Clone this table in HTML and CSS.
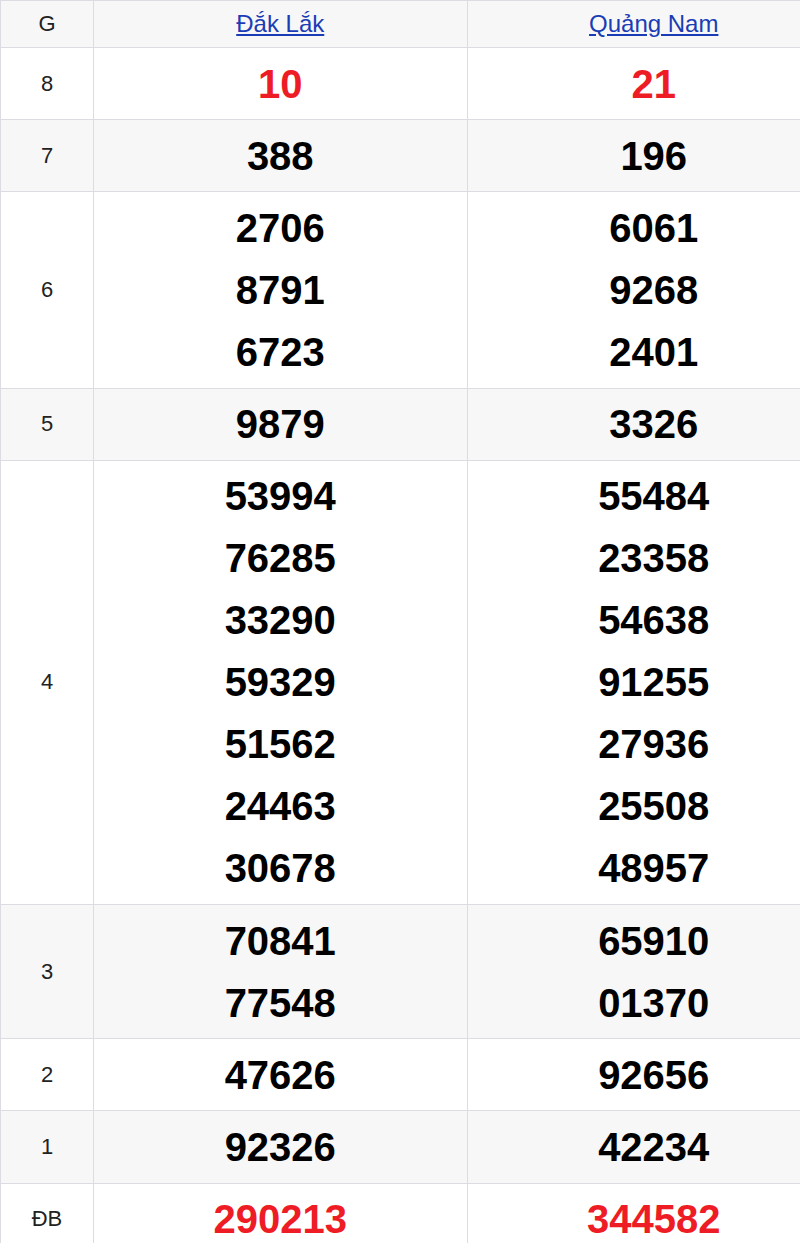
FILE: index.html
```html
<!DOCTYPE html>
<html lang="vi">
<head>
<meta charset="utf-8">
<title>Kết quả xổ số</title>
<link rel="stylesheet" href="styles.css">
</head>
<body>
<div class="frame">
<table class="kq">
  <thead>
    <tr class="head">
      <th class="g">G</th>
      <th class="prov"><a href="#">Đắk Lắk</a></th>
      <th class="prov"><a href="#">Quảng Nam</a></th>
    </tr>
  </thead>
  <tbody>
    <tr class="row">
      <td class="g">8</td>
      <td class="num red"><div>10</div></td>
      <td class="num red"><div>21</div></td>
    </tr>
    <tr class="row alt">
      <td class="g">7</td>
      <td class="num"><div>388</div></td>
      <td class="num"><div>196</div></td>
    </tr>
    <tr class="row">
      <td class="g">6</td>
      <td class="num"><div>2706</div><div>8791</div><div>6723</div></td>
      <td class="num"><div>6061</div><div>9268</div><div>2401</div></td>
    </tr>
    <tr class="row alt">
      <td class="g">5</td>
      <td class="num"><div>9879</div></td>
      <td class="num"><div>3326</div></td>
    </tr>
    <tr class="row">
      <td class="g">4</td>
      <td class="num"><div>53994</div><div>76285</div><div>33290</div><div>59329</div><div>51562</div><div>24463</div><div>30678</div></td>
      <td class="num"><div>55484</div><div>23358</div><div>54638</div><div>91255</div><div>27936</div><div>25508</div><div>48957</div></td>
    </tr>
    <tr class="row alt">
      <td class="g">3</td>
      <td class="num"><div>70841</div><div>77548</div></td>
      <td class="num"><div>65910</div><div>01370</div></td>
    </tr>
    <tr class="row">
      <td class="g">2</td>
      <td class="num"><div>47626</div></td>
      <td class="num"><div>92656</div></td>
    </tr>
    <tr class="row alt">
      <td class="g">1</td>
      <td class="num"><div>92326</div></td>
      <td class="num"><div>42234</div></td>
    </tr>
    <tr class="row">
      <td class="g">ĐB</td>
      <td class="num red"><div>290213</div></td>
      <td class="num red"><div>344582</div></td>
    </tr>
  </tbody>
</table>
</div>
</body>
</html>
```

FILE: styles.css
```css
html, body {
  margin: 0;
  padding: 0;
  background: #ffffff;
  overflow: hidden;
}

body {
  font-family: "Liberation Sans", Arial, sans-serif;
  color: #111;
}

.frame {
  width: 800px;
  overflow: hidden;
}

.kq {
  border-collapse: collapse;
  table-layout: fixed;
  width: 841px;
}

.kq th,
.kq td {
  border: 1px solid #dcdde2;
  text-align: center;
  vertical-align: middle;
  padding: 0;
}

.kq th:first-child,
.kq td:first-child {
  width: 92px;
}

.head {
  background: #f7f7f7;
  height: 47px;
}

.head th {
  font-weight: normal;
}

.g {
  font-size: 22px;
  color: #222;
  font-weight: normal;
}

.prov a {
  font-size: 24px;
  color: #1a3db5;
  text-decoration: underline;
}

.row {
  background: #ffffff;
}

.row.alt {
  background: #f7f7f7;
}

.num {
  padding: 4.6px 0 !important;
  font-size: 40px;
  font-weight: bold;
  line-height: 62px;
  color: #000;
}

.num.red {
  color: #ee1c25;
}
```
